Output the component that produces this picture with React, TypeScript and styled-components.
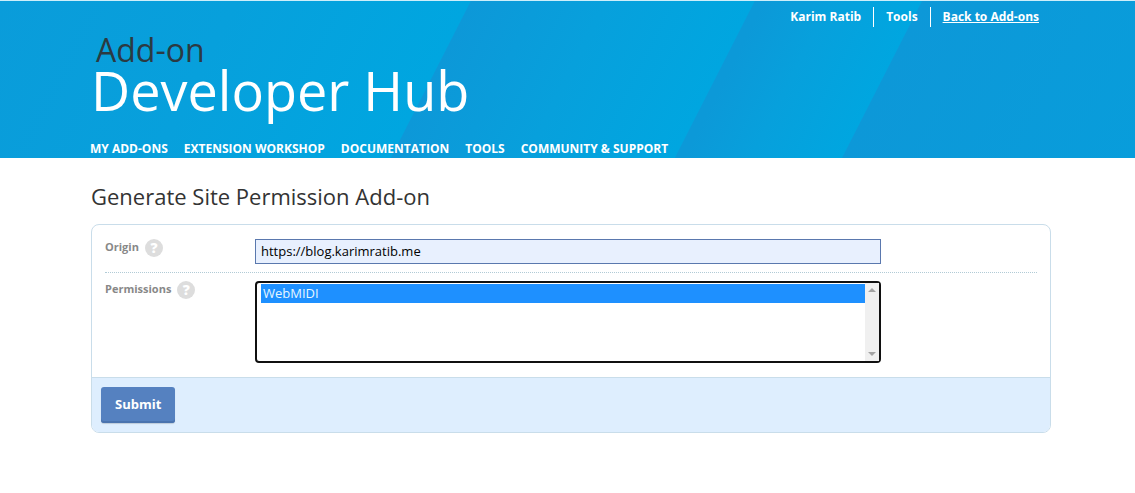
import React from "react";
import styled, { createGlobalStyle } from "styled-components";

const GlobalStyle = createGlobalStyle`
  *, *::before, *::after { box-sizing: border-box; }
  body {
    margin: 0;
    background: #fff;
    color: #333;
    font-family: "Open Sans", sans-serif;
    font-size: 13px;
  }
`;

const Header = styled.header`
  display: flex;
  flex-direction: column;
  height: 158px;
  padding: 0 96px 0 90px;
  border-top: 1px solid #cdeefa;
  background: linear-gradient(
    117deg,
    #0a9cda 0,
    #07a0dc 210px,
    #00a6e0 419px,
    #0d98d8 420px,
    #07a0dc 540px,
    #00a6e0 672px,
    #0c99d8 673px,
    #0c99d8 680px,
    #07a0dc 740px,
    #00a6e0 821px,
    #0d98d8 822px,
    #089ddb 1082px
  );
`;

const AccountNav = styled.nav`
  display: flex;
  justify-content: flex-end;
  padding-top: 6px;
`;

const AccountItem = styled.a<{ $underlined?: boolean }>`
  padding-left: 12px;
  color: #fff;
  font-size: 12px;
  font-weight: 700;
  line-height: 20px;
  text-decoration: ${(p) => (p.$underlined ? "underline" : "none")};

  & + & {
    margin-left: 12px;
    border-left: 1px solid #fff;
  }
`;

const Brand = styled.h1`
  display: flex;
  flex-direction: column;
  margin: 4px 0 0;
  padding-left: 1px;
  font-weight: 400;
`;

const BrandSmall = styled.span`
  padding-left: 5px;
  color: #2b3a42;
  font-size: 32px;
  line-height: 38px;
`;

const BrandLarge = styled.span`
  color: #fff;
  font-size: 54px;
  line-height: 42px;
`;

const MainNav = styled.nav`
  display: flex;
  gap: 16px;
  margin-top: auto;
`;

const MainLink = styled.a`
  color: #fff;
  font-size: 12px;
  font-weight: 700;
  line-height: 18px;
  text-decoration: none;
  text-transform: uppercase;
`;

const Main = styled.main`
  padding: 24px 84px 60px 91px;
`;

const Title = styled.h2`
  margin: 0 0 14px;
  font-size: 22px;
  font-weight: 400;
  line-height: 28px;
`;

const Panel = styled.form`
  border: 1px solid #c9ddea;
  border-radius: 8px;
  overflow: hidden;
`;

const Fields = styled.div`
  padding: 6px 13px;
`;

const Field = styled.div`
  display: grid;
  grid-template-columns: 150px minmax(0, 626px);
  align-items: start;
  padding: 8px 0;

  & + & {
    border-top: 1px dotted #b1cbd6;
  }
`;

const LabelCell = styled.div`
  display: flex;
  align-items: flex-start;
  gap: 6px;
  height: 18px;
`;

const Label = styled.label`
  color: #888;
  font-size: 11px;
  font-weight: 700;
  line-height: 16px;
`;

const Help = styled.button`
  width: 18px;
  height: 18px;
  padding: 0;
  border: 0;
  border-radius: 50%;
  background: #ddd;
  color: #fff;
  font: 800 14px/18px "Open Sans", sans-serif;
`;

const TextInput = styled.input`
  width: 100%;
  height: 25px;
  padding: 0 5px 2px;
  border: 1px solid #5a78ae;
  background: #e8f0fe;
  color: #000;
  font: 13px/18px "Open Sans", sans-serif;
`;

const ListFrame = styled.div`
  display: flex;
  height: 82px;
  padding: 1px 0 0 4px;
  border: 2px solid #101010;
  border-radius: 4px;
  background: #fff;
`;

const List = styled.select`
  flex: 1;
  min-width: 0;
  padding: 0;
  border: 0;
  border-radius: 0;
  outline: 0;
  background: #fff;
  font: 13px/18px "Open Sans", sans-serif;
  overflow: hidden;

  option {
    min-height: 19px;
    padding: 0 2px 1px;
    line-height: 18px;
  }

  option:checked {
    background: linear-gradient(#1e90ff, #1e90ff);
    color: #fff;
    -webkit-text-fill-color: #e6f6ff;
  }
`;

const ScrollTrack = styled.div`
  display: flex;
  flex-direction: column;
  justify-content: space-between;
  align-items: center;
  width: 14px;
  margin-top: -1px;
  padding: 5px 0;
  background: #f0f0f0;
`;

const Actions = styled.div`
  padding: 9px;
  border-top: 1px solid #c9ddea;
  background: #deeefe;
`;

const Submit = styled.button`
  display: block;
  height: 36px;
  padding: 0 14px 2px;
  border: 0;
  border-radius: 3px;
  background: #5581c0;
  box-shadow: 0 1px 1px rgba(0, 0, 0, 0.15), inset 0 -2px 0 #4a73ae;
  color: #fff;
  font: 700 13px/18px "Open Sans", sans-serif;
`;

const navigation = [
  "My Add-ons",
  "Extension Workshop",
  "Documentation",
  "Tools",
  "Community & Support",
];

function Arrow({ down = false }: { down?: boolean }) {
  return (
    <svg width="8" height="4" viewBox="0 0 8 4" aria-hidden="true">
      <path d={down ? "M0 0h8L4 4z" : "M0 4h8L4 0z"} fill="#a3a3a3" />
    </svg>
  );
}

export default function App() {
  return (
    <>
      <GlobalStyle />
      <Header>
        <AccountNav aria-label="Account">
          <AccountItem href="#account">Karim Ratib</AccountItem>
          <AccountItem href="#tools">Tools</AccountItem>
          <AccountItem href="#addons" $underlined>
            Back to Add-ons
          </AccountItem>
        </AccountNav>
        <Brand>
          <BrandSmall>Add-on</BrandSmall>
          <BrandLarge>Developer Hub</BrandLarge>
        </Brand>
        <MainNav aria-label="Developer Hub">
          {navigation.map((item) => (
            <MainLink key={item} href="#">
              {item}
            </MainLink>
          ))}
        </MainNav>
      </Header>
      <Main>
        <Title>Generate Site Permission Add-on</Title>
        <Panel onSubmit={(event) => event.preventDefault()}>
          <Fields>
            <Field>
              <LabelCell>
                <Label htmlFor="origin">Origin</Label>
                <Help type="button" aria-label="Help for Origin">?</Help>
              </LabelCell>
              <TextInput id="origin" type="text" defaultValue="https://blog.karimratib.me" />
            </Field>
            <Field>
              <LabelCell>
                <Label htmlFor="permissions">Permissions</Label>
                <Help type="button" aria-label="Help for Permissions">?</Help>
              </LabelCell>
              <ListFrame>
                <List id="permissions" multiple defaultValue={["webmidi"]}>
                  <option value="webmidi">WebMIDI</option>
                </List>
                <ScrollTrack>
                  <Arrow />
                  <Arrow down />
                </ScrollTrack>
              </ListFrame>
            </Field>
          </Fields>
          <Actions>
            <Submit type="submit">Submit</Submit>
          </Actions>
        </Panel>
      </Main>
    </>
  );
}
